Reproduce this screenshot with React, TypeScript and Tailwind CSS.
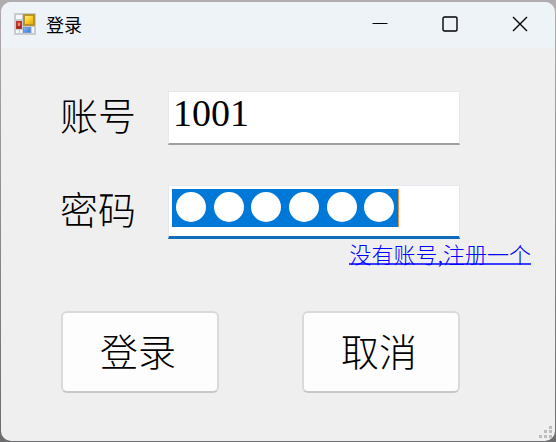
import { useState } from 'react'

const cjk = "font-['Noto_Sans_CJK_SC',sans-serif]"

// Two-column form icon shown at the left of the title bar.
function FormIcon() {
  return (
    <svg width="22" height="22" viewBox="0 0 22 22" aria-hidden="true">
      <defs>
        <linearGradient id="gold" x1="0" y1="0" x2="1" y2="1">
          <stop offset="0" stopColor="#fff0a0" />
          <stop offset="0.5" stopColor="#fbcf2c" />
          <stop offset="1" stopColor="#dd9d10" />
        </linearGradient>
        <linearGradient id="red" x1="0" y1="0" x2="0" y2="1">
          <stop offset="0" stopColor="#d9503c" />
          <stop offset="1" stopColor="#a01616" />
        </linearGradient>
        <linearGradient id="blue" x1="0" y1="0" x2="1" y2="1">
          <stop offset="0" stopColor="#8fbcf5" />
          <stop offset="1" stopColor="#3272d2" />
        </linearGradient>
      </defs>
      <rect width="22" height="22" fill="#c8cbd0" />
      <g fill="#f4f7fb">
        <rect x="2" y="2" width="6" height="4" />
        <rect x="2" y="17" width="3" height="3" />
        <rect x="6" y="17" width="2" height="3" />
        <rect x="18" y="14" width="2" height="6" />
      </g>
      <rect x="10" y="2" width="10" height="10" fill="url(#gold)" stroke="#b8922c" strokeWidth="2" />
      <rect x="2.5" y="8.5" width="5" height="7" fill="url(#red)" stroke="#b0352a" />
      <rect x="4" y="10" width="2" height="3" fill="#e88a78" />
      <rect x="9.5" y="14.5" width="7" height="5" fill="url(#blue)" stroke="#6f97d0" />
    </svg>
  )
}

function TitleBar() {
  const control = 'flex h-full w-[70px] items-center justify-center'
  return (
    <header className="flex h-[46px] items-center bg-[#eef3f8] pb-0.5 pl-[13px]">
      <FormIcon />
      <h1 className={`ml-[10px] text-[18px] leading-6 text-black ${cjk}`}>登录</h1>
      <div className="ml-auto flex h-full">
        <button type="button" aria-label="最小化" className={control}>
          <svg width="16" height="16" viewBox="0 0 16 16">
            <path d="M0.5 7.5h15" stroke="#000" />
          </svg>
        </button>
        <button type="button" aria-label="最大化" className={control}>
          <svg width="16" height="16" viewBox="0 0 16 16">
            <rect x="1" y="1" width="14" height="14" rx="1.5" fill="none" stroke="#000" strokeWidth="1.4" />
          </svg>
        </button>
        <button type="button" aria-label="关闭" className={control}>
          <svg width="16" height="16" viewBox="0 0 16 16">
            <path d="M1 1l14 14M15 1L1 15" stroke="#000" strokeWidth="1.4" />
          </svg>
        </button>
      </div>
    </header>
  )
}

function SizeGrip() {
  return (
    <svg className="absolute right-0.5 bottom-0.5" width="14" height="14" viewBox="0 0 14 14" aria-hidden="true">
      <g fill="#bdbdbd">
        <rect x="10" y="1" width="3" height="3" />
        <rect x="5" y="5" width="3" height="3" />
        <rect x="10" y="5" width="3" height="3" />
        <rect x="0" y="10" width="3" height="3" />
        <rect x="5" y="10" width="3" height="3" />
        <rect x="10" y="10" width="3" height="3" />
      </g>
    </svg>
  )
}

export default function App() {
  const [account, setAccount] = useState('1001')
  const [password, setPassword] = useState('123456')

  const label = `w-[108px] shrink-0 text-[38px] leading-[46px] font-light text-black ${cjk}`
  const button = `h-[82px] w-[158px] rounded-md border-2 border-[#dadada] border-b-[#c8c8c8] bg-[#fdfdfd] pr-1 pb-1 text-[38px] leading-[46px] font-light text-black ${cjk}`

  return (
    <div className="flex min-h-screen flex-col bg-linear-to-b from-[#b0acb0] to-[#6c6c6e] px-px pt-0.5 pb-px">
      <main className="relative flex flex-1 flex-col overflow-hidden rounded-[10px] bg-[#efefef]">
        <TitleBar />
        <form className="pt-[43px] pr-[95px] pl-[59px]" onSubmit={(e) => e.preventDefault()}>
          <div className="flex items-start">
            <label htmlFor="account" className={label}>账号</label>
            <input
              id="account"
              value={account}
              onChange={(e) => setAccount(e.target.value)}
              className="h-[54px] min-w-0 flex-1 border border-b-2 border-[#e8e8e8] border-b-[#a0a0a0] bg-white px-1 pb-2.5 font-['Liberation_Serif',serif] text-[38px] leading-10 text-black outline-none"
            />
          </div>

          <div className="mt-10 flex items-start">
            <label htmlFor="password" className={label}>密码</label>
            <div className="relative min-w-0 flex-1">
              <input
                id="password"
                type="password"
                value={password}
                onChange={(e) => setPassword(e.target.value)}
                className="block h-[54px] w-full border border-b-[3px] border-[#e3e9ee] border-b-[#0f6cbd] bg-white px-1 text-[38px] text-transparent outline-none"
              />
              {/* selected characters with the caret at the end */}
              <div
                aria-hidden="true"
                className="pointer-events-none absolute top-1 left-1 flex h-[38px] w-[227px] border-r border-[#f08a3c] bg-[#0078d7]"
              >
                {Array.from(password, (_, i) => (
                  <span key={i} className="flex flex-1 justify-center pt-[3px]">
                    <span className="size-[30px] shrink-0 rounded-full bg-white" />
                  </span>
                ))}
              </div>
            </div>
          </div>

          <div className="-mr-[71px] flex justify-end">
            <a
              href="#register"
              className={`mt-1 border-b-2 border-[#3d3dff] text-[22px] leading-5 font-light text-[#0000ff] ${cjk}`}
            >
              没有账号,注册一个
            </a>
          </div>

          <div className="mt-[46px] flex justify-between pl-px">
            <button type="submit" className={button}>登录</button>
            <button type="button" className={button}>取消</button>
          </div>
        </form>
        <SizeGrip />
      </main>
    </div>
  )
}
